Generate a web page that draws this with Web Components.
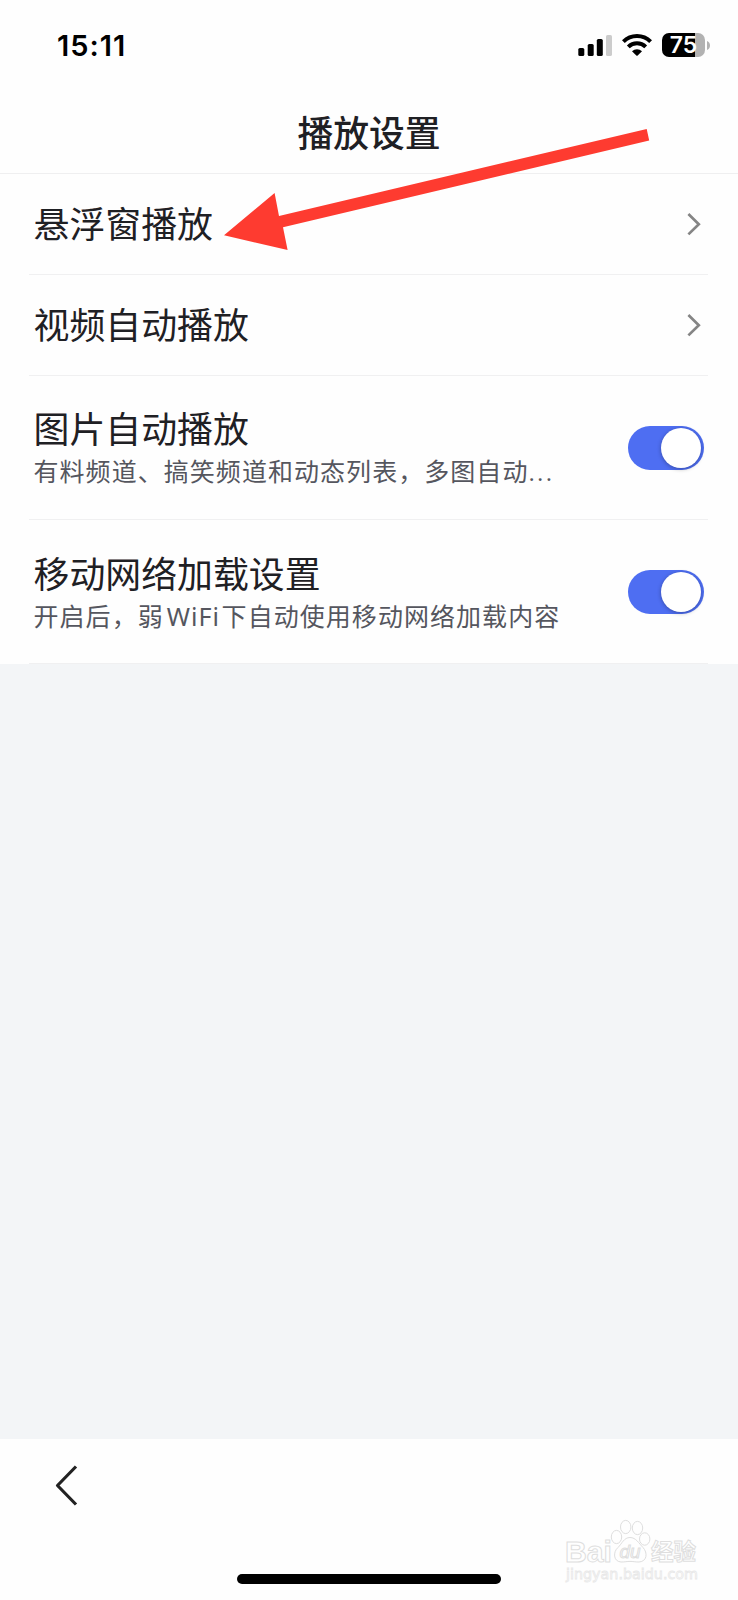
<!DOCTYPE html>
<html lang="zh-CN">
<head>
<meta charset="utf-8">
<title>播放设置</title>
<style>
  body {
    margin: 0;
    background: #fff;
    font-family: "Noto Sans CJK SC", sans-serif;
    color: #1f2024;
  }
</style>
</head>
<body>

<template id="settings-page-template">
  <style>
    :host {
      position: relative;
      display: flex;
      flex-direction: column;
      width: 738px;
      height: 1600px;
      overflow: hidden;
      background: #fefefe;
    }
    main {
      flex: 1;
      background: #f3f5f7;
    }
  </style>
  <slot name="top"></slot>
  <main><slot></slot></main>
  <slot name="bottom"></slot>
  <slot name="overlay"></slot>
</template>

<template id="status-bar-template">
  <style>
    :host {
      display: flex;
      align-items: center;
      justify-content: space-between;
      box-sizing: border-box;
      height: 90px;
      padding: 0 28px 0 57px;
      color: #000;
      font-family: Inter, sans-serif;
      font-weight: 600;
    }
    .time {
      padding-top: 2px;
      font-size: 29px;
      line-height: 36px;
      letter-spacing: 1px;
    }
    .icons {
      display: flex;
      align-items: center;
      gap: 9px;
    }
    svg {
      display: block;
    }
    .battery {
      display: flex;
      align-items: center;
      gap: 2px;
      margin-left: 1px;
    }
    .level {
      width: 43px;
      height: 24px;
      border-radius: 7px;
      background: linear-gradient(to right, #000 33px, #b2b2b2 33px);
      color: #fff;
      font-size: 23px;
      line-height: 24px;
      text-align: center;
    }
  </style>
  <span class="time"></span>
  <div class="icons">
    <svg width="35" height="24" viewBox="0 0 35 24">
      <rect x="0.3" y="15" width="6" height="8" rx="1.6"/>
      <rect x="9.7" y="11" width="6" height="12" rx="1.6"/>
      <rect x="18.8" y="6" width="6" height="17" rx="1.6"/>
      <rect x="28" y="2" width="6" height="21" rx="1.6" fill="#ccc"/>
    </svg>
    <svg width="30" height="24" viewBox="0 0 30 24">
      <g fill="none" stroke="#000" stroke-width="4">
        <path d="M1.4 8.6a19.4 19.4 0 0 1 27.2 0"/>
        <path d="M6.3 13.9a12.4 12.4 0 0 1 17.4 0"/>
      </g>
      <path d="M10 18.2a7.2 7.2 0 0 1 10 0l-4.3 4.3a1 1 0 0 1-1.4 0z"/>
    </svg>
    <div class="battery">
      <div class="level"></div>
      <svg width="3" height="9" viewBox="0 0 3 9"><path d="M0 0C4 1.5 4 7.5 0 9z" fill="#b2b2b2"/></svg>
    </div>
  </div>
</template>

<template id="title-bar-template">
  <style>
    :host {
      display: flex;
      align-items: center;
      justify-content: center;
      box-sizing: border-box;
      height: 84px;
      padding-bottom: 2px;
      border-bottom: 1px solid #efeff0;
      font-size: 35.8px;
      line-height: 52px;
      font-weight: 500;
    }
  </style>
  <slot></slot>
</template>

<template id="setting-item-template">
  <style>
    :host {
      display: block;
      height: 101px;
      padding: 0 30px 0 29px;
      background: #fefefe;
    }
    :host([tall]) {
      height: 144px;
    }
    .row {
      display: flex;
      align-items: center;
      justify-content: space-between;
      box-sizing: border-box;
      height: 100%;
      padding: 0 4px 0 4.5px;
      border-bottom: 1px solid #f0f0f1;
    }
    .text {
      padding-bottom: 4px;
    }
    .title {
      font-size: 35.9px;
      line-height: 52px;
    }
    .note {
      font-size: 25px;
      line-height: 34px;
      letter-spacing: 1.05px;
      color: #55565e;
      white-space: nowrap;
    }
  </style>
  <div class="row">
    <div class="text">
      <div class="title"><slot></slot></div>
      <div class="note"><slot name="note"></slot></div>
    </div>
    <slot name="control"></slot>
  </div>
</template>

<template id="chevron-icon-template">
  <style>
    :host { display: block; padding-right: 3px; }
    svg { display: block; }
  </style>
  <svg width="14" height="24" viewBox="0 0 14 24">
    <path d="M1.4 2L11.8 12.200 1.4 22.400" fill="none" stroke="#858585" stroke-width="2.7"/>
  </svg>
</template>

<template id="toggle-switch-template">
  <style>
    :host {
      display: flex;
      align-items: center;
      justify-content: flex-end;
      box-sizing: border-box;
      width: 76px;
      height: 44px;
      padding: 0 3px;
      border-radius: 22px;
      background: #4e6ef2;
    }
    .knob {
      width: 40px;
      height: 40px;
      border-radius: 50%;
      background: #fff;
      box-shadow: 0 1px 4px rgba(0, 0, 0, 0.3);
    }
  </style>
  <div class="knob"></div>
</template>

<template id="bottom-bar-template">
  <style>
    :host {
      display: flex;
      flex-direction: column;
      justify-content: space-between;
      box-sizing: border-box;
      height: 161px;
      padding: 24px 0 16px 53px;
      background: #fefefe;
    }
    svg { display: block; }
    .home {
      width: 264px;
      height: 10px;
      margin-left: 184px;
      border-radius: 5px;
      background: #000;
    }
  </style>
  <svg width="26" height="46" viewBox="0 0 26 46">
    <path d="M23 3.500L4.500 22.500 23 41.500" fill="none" stroke="#222" stroke-width="3.2" stroke-linejoin="round"/>
  </svg>
  <div class="home"></div>
</template>

<template id="pointer-arrow-template">
  <style>
    :host { position: absolute; left: 220px; top: 120px; }
    svg { display: block; }
  </style>
  <svg width="440" height="140" viewBox="220 120 440 140">
    <path d="M224 235.2L274.6 193 279 216 646.7 129 649.2 140.4 283 227.3 287.6 250z" fill="#fe3b30"/>
  </svg>
</template>

<template id="site-mark-template">
  <style>
    :host { position: absolute; left: 560px; top: 1514px; }
    svg { display: block; }
    text { font-family: "Liberation Sans", "Noto Sans CJK SC", sans-serif; }
    .url { font-family: "DejaVu Sans", sans-serif; }
  </style>
  <svg width="145" height="76" viewBox="560 1514 145 76" fill="#fefefe" stroke="#dedede" stroke-width="1">
    <text x="565" y="1561.5" font-size="29" font-weight="700" textLength="47" lengthAdjust="spacingAndGlyphs">Bai</text>
    <ellipse cx="616.5" cy="1537" rx="5.2" ry="6.6"/>
    <ellipse cx="625.7" cy="1527" rx="5.2" ry="6.6"/>
    <ellipse cx="637.5" cy="1528" rx="5.2" ry="6.6"/>
    <ellipse cx="644.7" cy="1539" rx="5.2" ry="6.2"/>
    <path d="M630 1537.500c-6 0-8 6-12 10-5 4-5 14 3 14.500 4 0 6-.6 9-.6s5 .6 9 .6c8-.5 9-9 4-14.500-4-4-7-10-13-10z"/>
    <text x="619.5" y="1558" font-size="18" font-style="italic" textLength="21" lengthAdjust="spacingAndGlyphs">du</text>
    <text x="651" y="1560" font-size="23" font-weight="700" textLength="45" lengthAdjust="spacingAndGlyphs">经验</text>
    <text class="url" x="566" y="1578.500" font-size="14.5" stroke="#e8e8e8" stroke-width="0.8" textLength="132" lengthAdjust="spacingAndGlyphs">jingyan.baidu.com</text>
  </svg>
</template>

<style>
  .latin { font-family: "Noto Sans", sans-serif; margin: 0 1.5px 0 3px; }
  .dots { font-family: Roboto, sans-serif; letter-spacing: 2px; }
</style>

<settings-page>
  <status-bar slot="top" time="15:11" battery="75"></status-bar>
  <title-bar slot="top">播放设置</title-bar>

  <setting-item>悬浮窗播放<chevron-icon slot="control"></chevron-icon></setting-item>
  <setting-item>视频自动播放<chevron-icon slot="control"></chevron-icon></setting-item>
  <setting-item tall>图片自动播放<span slot="note">有料频道、搞笑频道和动态列表，多图自动<span class="dots">...</span></span><toggle-switch slot="control"></toggle-switch></setting-item>
  <setting-item tall>移动网络加载设置<span slot="note">开启后，弱<span class="latin">WiFi</span>下自动使用移动网络加载内容</span><toggle-switch slot="control"></toggle-switch></setting-item>

  <bottom-bar slot="bottom"></bottom-bar>
  <pointer-arrow slot="overlay"></pointer-arrow>
  <site-mark slot="overlay"></site-mark>
</settings-page>

<script>
  class TemplateElement extends HTMLElement {
    constructor() {
      super();
      const template = document.querySelector(`#${this.localName}-template`);
      this.attachShadow({ mode: "open" });
      this.shadowRoot.appendChild(template.content.cloneNode(true));
    }
  }

  class StatusBar extends TemplateElement {
    connectedCallback() {
      this.shadowRoot.querySelector(".time").textContent = this.getAttribute("time");
      this.shadowRoot.querySelector(".level").textContent = this.getAttribute("battery");
    }
  }

  class SettingItem extends TemplateElement {
    connectedCallback() {
      if (!this.querySelector("[slot=note]")) {
        this.shadowRoot.querySelector(".note").remove();
      }
    }
  }

  customElements.define("settings-page", class extends TemplateElement {});
  customElements.define("status-bar", StatusBar);
  customElements.define("title-bar", class extends TemplateElement {});
  customElements.define("setting-item", SettingItem);
  customElements.define("chevron-icon", class extends TemplateElement {});
  customElements.define("toggle-switch", class extends TemplateElement {});
  customElements.define("bottom-bar", class extends TemplateElement {});
  customElements.define("pointer-arrow", class extends TemplateElement {});
  customElements.define("site-mark", class extends TemplateElement {});
</script>
</body>
</html>
